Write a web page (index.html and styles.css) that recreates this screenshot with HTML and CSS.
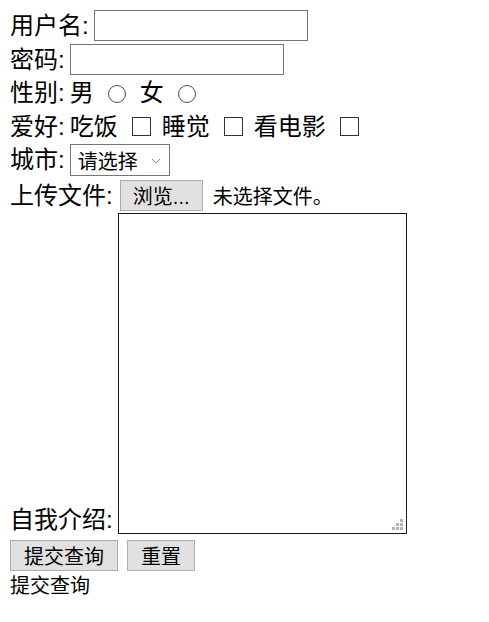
FILE: index.html
```html
<!DOCTYPE html>
<html>
<head>
    <meta charset="UTF-8">
    <meta name="viewport" content="width=device-width, initial-scale=1">
    <title>表单</title>
    <link rel="stylesheet" href="styles.css">
</head>
<body>
<form class="form">
    <div class="row row-user">
        <label for="username">用户名:</label>
        <input class="inp" id="username" type="text">
    </div>
    <div class="row row-pass">
        <label for="password">密码:</label>
        <input class="inp" id="password" type="password">
    </div>
    <div class="row row-sex">
        <label>性别:</label>
        <span class="opt">男</span><input class="radio" type="radio" name="sex">
        <span class="opt">女</span><input class="radio" type="radio" name="sex">
    </div>
    <div class="row row-hobby">
        <label>爱好:</label>
        <span class="opt">吃饭</span><input class="check" type="checkbox">
        <span class="opt">睡觉</span><input class="check" type="checkbox">
        <span class="opt">看电影</span><input class="check" type="checkbox">
    </div>
    <div class="row row-city">
        <label for="city">城市:</label>
        <div class="select">
            <span>请选择</span>
            <svg class="arrow" width="10" height="6" viewBox="0 0 10 6"><path d="M1 1 L5 5 L9 1" fill="none" stroke="#8a8a8a" stroke-width="1"/></svg>
        </div>
    </div>
    <div class="row row-file">
        <label>上传文件:</label>
        <span class="btn btn-file">浏览...</span>
        <span class="file-name">未选择文件。</span>
    </div>
    <div class="row row-intro">
        <label for="intro">自我介绍:</label>
        <div class="area-wrap">
            <textarea id="intro" class="area"></textarea>
            <svg class="grip" width="11" height="11" viewBox="0 0 11 11">
                <rect x="8" y="0" width="3" height="3" fill="#b4b4b4"/>
                <rect x="4" y="4" width="3" height="3" fill="#b4b4b4"/>
                <rect x="8" y="4" width="3" height="3" fill="#b4b4b4"/>
                <rect x="0" y="8" width="3" height="3" fill="#b4b4b4"/>
                <rect x="4" y="8" width="3" height="3" fill="#b4b4b4"/>
                <rect x="8" y="8" width="3" height="3" fill="#b4b4b4"/>
            </svg>
        </div>
    </div>
    <div class="row row-btns">
        <span class="btn btn-submit">提交查询</span>
        <span class="btn btn-reset">重置</span>
    </div>
    <div class="note">提交查询</div>
</form>
</body>
</html>
```
FILE: styles.css
```css
body {
    margin: 0;
    padding: 10px;
    color: #000;
    background: #fff;
    font-family: "Liberation Sans", "Noto Sans CJK SC", sans-serif;
}

.row {
    display: flex;
    align-items: center;
}

.row label {
    font-size: 24px;
    line-height: 1;
    margin-right: 5px;
}

.row-user {
    height: 31px;
}

.row-pass {
    height: 31px;
    margin-top: 3px;
}

.row-sex {
    height: 34px;
    margin-top: 1px;
}

.row-hobby {
    height: 33px;
}

.row-city {
    height: 32px;
    margin-top: 1px;
}

.row-file {
    height: 31px;
    margin-top: 4px;
}

.row-intro {
    align-items: flex-end;
    margin-top: 2px;
}

.row-btns {
    height: 31px;
    margin-top: 6px;
}

.opt {
    font-size: 24px;
    line-height: 1;
}

.inp {
    box-sizing: border-box;
    width: 214px;
    height: 31px;
    margin: 0;
    padding: 0 4px;
    border: 1px solid #767676;
    border-radius: 0;
    font-size: 20px;
    outline: none;
}

.radio {
    -webkit-appearance: none;
    appearance: none;
    box-sizing: border-box;
    width: 18px;
    height: 18px;
    margin: 2px 14px 0 14px;
    border: 1px solid #4d4d4d;
    border-radius: 50%;
    background: #fff;
}

.check {
    -webkit-appearance: none;
    appearance: none;
    box-sizing: border-box;
    width: 19px;
    height: 19px;
    margin: 0 11px 0 14px;
    border: 1px solid #333;
    border-radius: 0;
    background: #fff;
}

.select {
    box-sizing: border-box;
    display: flex;
    align-items: center;
    width: 100px;
    height: 32px;
    padding: 0 8px 0 7px;
    border: 1px solid #767676;
    font-size: 20px;
    font-family: "Noto Sans CJK SC", sans-serif;
}

.select span {
    flex: 1;
}

.arrow {
    margin-top: 1px;
}

.btn {
    box-sizing: border-box;
    display: inline-flex;
    align-items: center;
    justify-content: center;
    height: 31px;
    border: 1px solid #adadad;
    background: #e1e1e1;
    font-size: 20px;
}

.row-file label {
    margin-right: 7px;
}

.btn-file {
    width: 83px;
}

.file-name {
    margin-left: 10px;
    font-size: 20px;
}

.row-intro label {
    margin-right: 5px;
    margin-bottom: 2px;
}

.area-wrap {
    position: relative;
    display: flex;
}

.area {
    box-sizing: border-box;
    width: 289px;
    height: 321px;
    margin: 0;
    border: 1px solid #1a1a1a;
    resize: none;
    outline: none;
}

.grip {
    position: absolute;
    right: 4px;
    bottom: 4px;
}

.btn-submit {
    width: 108px;
}

.btn-reset {
    width: 68px;
    margin-left: 9px;
}

.note {
    margin-top: 2px;
    font-size: 20px;
    line-height: 26px;
}
```
